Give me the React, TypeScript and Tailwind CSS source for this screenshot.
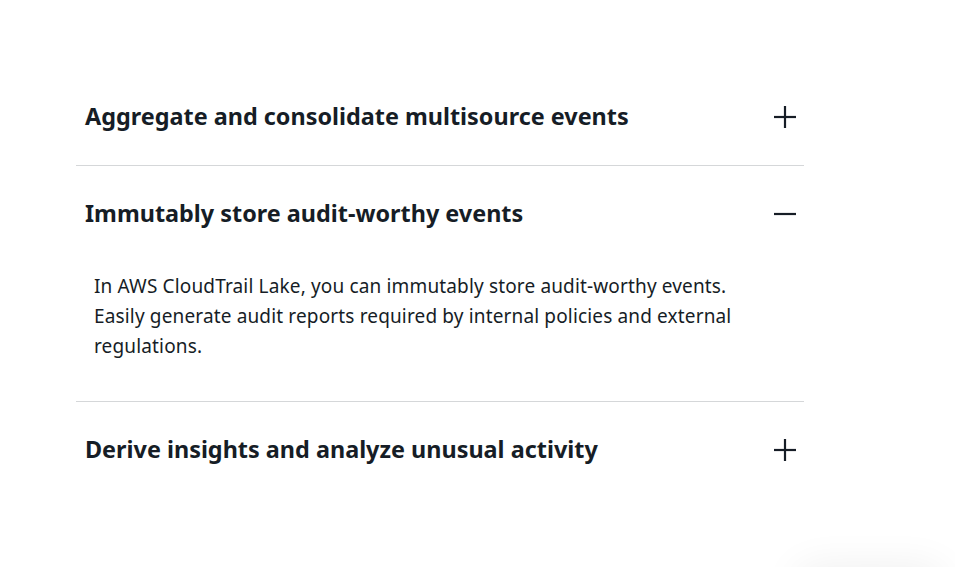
import { useState } from "react"

const items = [
  {
    title: "Aggregate and consolidate multisource events",
    body: "",
  },
  {
    title: "Immutably store audit-worthy events",
    body: "In AWS CloudTrail Lake, you can immutably store audit-worthy events. Easily generate audit reports required by internal policies and external regulations.",
  },
  {
    title: "Derive insights and analyze unusual activity",
    body: "",
  },
]

function Toggle({ open }: { open: boolean }) {
  return (
    <svg width="24" height="24" viewBox="0 0 24 24" className="shrink-0 text-[#161d26]">
      <path d="M1 12h22" stroke="currentColor" strokeWidth="2.2" />
      {!open && <path d="M12 1v22" stroke="currentColor" strokeWidth="2.2" />}
    </svg>
  )
}

export default function App() {
  const [openIndex, setOpenIndex] = useState(1)

  return (
    <div className="relative min-h-[567px] bg-white overflow-hidden" style={{ fontFamily: '"Noto Sans", "Open Sans", sans-serif' }}>
      <div className="ml-[76px] w-[728px] pt-[69px]">
        {items.map((item, i) => {
          const open = openIndex === i
          return (
            <div key={item.title} className={i < items.length - 1 ? "border-b border-[#d5d7d9]" : ""}>
              <button
                className="flex h-[96px] w-full items-center justify-between pl-[9px] pr-[7px] text-left"
                onClick={() => setOpenIndex(open ? -1 : i)}
              >
                <span className="text-[23.4px] font-bold text-[#161d26]">{item.title}</span>
                <Toggle open={open} />
              </button>
              {open && (
                <p className="w-[660px] pl-[18px] pt-[9px] pb-[40px] text-[19px] leading-[30px] tracking-[0.15px] text-[#161d26]">
                  {item.body}
                </p>
              )}
            </div>
          )
        })}
      </div>
      <div className="absolute -bottom-[40px] right-[10px] h-[40px] w-[150px] rounded-full bg-white shadow-[0_0_40px_rgba(0,0,0,0.07)]" />
    </div>
  )
}
